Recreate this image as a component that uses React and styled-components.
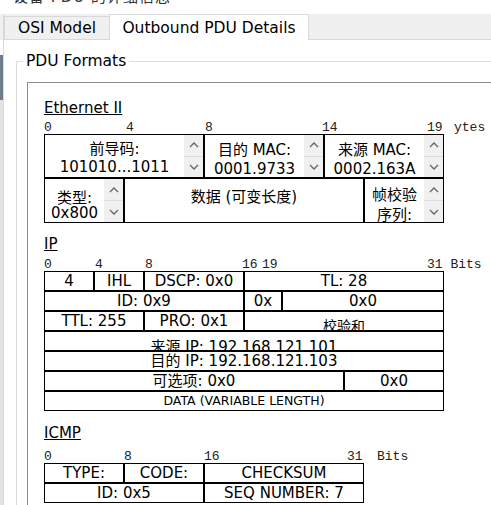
import React from 'react';
import styled, { createGlobalStyle } from 'styled-components';

const GlobalStyle = createGlobalStyle`
  html, body {
    margin: 0;
    padding: 0;
    background: #fff;
  }
  body {
    width: 491px;
    height: 505px;
    overflow: hidden;
    font-family: "DejaVu Sans", "Noto Sans CJK SC", sans-serif;
    color: #000;
  }
`;

const ethTicks = [[0, '0'], [82, '4'], [161, '8'], [278, '14'], [383, '19'], [410, 'ytes']];
const ipTicks = [[0, '0'], [51, '4'], [101, '8'], [198, '16'], [218, '19'], [383, '31 Bits']];
const icmpTicks = [[0, '0'], [80, '8'], [160, '16'], [303, '31'], [333, 'Bits']];

function Chevron({ down }) {
    return (
        <svg width="10" height="6" viewBox="0 0 10 6">
            <path
                d={down ? 'M1 1 L5 5 L9 1' : 'M1 5 L5 1 L9 5'}
                stroke="#666"
                strokeWidth="1.3"
                fill="none"
            />
        </svg>
    );
}

function Spinner() {
    return (
        <Spin>
            <SpinBtn><Chevron /></SpinBtn>
            <SpinBtn><Chevron down /></SpinBtn>
        </Spin>
    );
}

function Ruler({ ticks, mt }) {
    return (
        <RulerLine $mt={mt}>
            {ticks.map(([x, label]) => (
                <Tick key={label + x} $x={x}>{label}</Tick>
            ))}
        </RulerLine>
    );
}

export default function App() {
    return (
        <Window>
            <GlobalStyle />
            <LeftEdge />
            <Main>
                <TitleStrip>
                    <TitleText>设备 PDU 的详细信息</TitleText>
                </TitleStrip>
                <TabBar>
                    <Tab $w={106}>OSI Model</Tab>
                    <Tab $w={200} $active>Outbound PDU Details</Tab>
                </TabBar>
                <Content>
                    <Group>
                        <Legend>PDU Formats</Legend>
                        <Panel>
                            <SectionTitle>Ethernet II</SectionTitle>
                            <Ruler ticks={ethTicks} mt={3} />
                            <Frame $w={400}>
                                <Row $h={44}>
                                    <EthCell $w={160}>
                                        <CellText $pt={5} $lh={18}>{'前导码:\n101010...1011'}</CellText>
                                        <Spinner />
                                    </EthCell>
                                    <EthCell $w={120}>
                                        <CellText $pt={6} $lh={19}>{'目的 MAC:\n0001.9733'}</CellText>
                                        <Spinner />
                                    </EthCell>
                                    <EthCell $w={120}>
                                        <CellText $pt={6} $lh={19}>{'来源 MAC:\n0002.163A'}</CellText>
                                        <Spinner />
                                    </EthCell>
                                </Row>
                                <Row $h={45}>
                                    <EthCell $w={80}>
                                        <CellText $pt={12} $lh={15}>{'类型:\n0x800'}</CellText>
                                        <Spinner />
                                    </EthCell>
                                    <EthCell $w={240}>
                                        <CellText $pt={9} $lh={18}>数据 (可变长度)</CellText>
                                    </EthCell>
                                    <EthCell $w={80}>
                                        <CellText $pt={6} $lh={20}>{'帧校验\n序列:'}</CellText>
                                        <Spinner />
                                    </EthCell>
                                </Row>
                            </Frame>

                            <SectionTitle $mt={12}>IP</SectionTitle>
                            <Ruler ticks={ipTicks} mt={4} />
                            <Frame $w={400}>
                                <Row $h={20}>
                                    <Cell $w={50}>4</Cell>
                                    <Cell $w={50}>IHL</Cell>
                                    <Cell $w={100}>DSCP: 0x0</Cell>
                                    <Cell $w={200}>TL: 28</Cell>
                                </Row>
                                <Row $h={20}>
                                    <Cell $w={200}>ID: 0x9</Cell>
                                    <Cell $w={38}>0x</Cell>
                                    <Cell $w={162}>0x0</Cell>
                                </Row>
                                <Row $h={20}>
                                    <Cell $w={100}>TTL: 255</Cell>
                                    <Cell $w={100}>PRO: 0x1</Cell>
                                    <Cell $w={200} $pt={6} $lh={16} $fs={14}>校验和</Cell>
                                </Row>
                                <Row $h={20}>
                                    <Cell $w={400} $pt={6}>来源 IP: 192.168.121.101</Cell>
                                </Row>
                                <Row $h={20}>
                                    <Cell $w={400}>目的 IP: 192.168.121.103</Cell>
                                </Row>
                                <Row $h={20}>
                                    <Cell $w={300}>可选项: 0x0</Cell>
                                    <Cell $w={100}>0x0</Cell>
                                </Row>
                                <Row $h={20}>
                                    <Cell $w={400} $fs={12.5}>DATA (VARIABLE LENGTH)</Cell>
                                </Row>
                            </Frame>

                            <SectionTitle $mt={13}>ICMP</SectionTitle>
                            <Ruler ticks={icmpTicks} mt={7} />
                            <Frame $w={320}>
                                <Row $h={20}>
                                    <Cell $w={80}>TYPE:</Cell>
                                    <Cell $w={80}>CODE:</Cell>
                                    <Cell $w={160}>CHECKSUM</Cell>
                                </Row>
                                <Row $h={20}>
                                    <Cell $w={160}>ID: 0x5</Cell>
                                    <Cell $w={160}>SEQ NUMBER: 7</Cell>
                                </Row>
                            </Frame>
                        </Panel>
                    </Group>
                </Content>
            </Main>
        </Window>
    );
}

const Window = styled.div`
    display: flex;
    width: 491px;
    height: 505px;
    overflow: hidden;
    background: #fff;
`;

const LeftEdge = styled.div`
    flex: none;
    width: 3px;
    background: linear-gradient(
        to bottom,
        #fff 0 14px,
        #f0f0f0 14px 40px,
        #fff 40px 55px,
        #6d7d8c 55px 100px,
        #e2e2e2 100px
    );
`;

const Main = styled.div`
    flex: 1;
    display: flex;
    flex-direction: column;
    min-width: 0;
`;

const TitleStrip = styled.div`
    flex: none;
    height: 14px;
    overflow: hidden;
    padding-left: 10px;
`;

const TitleText = styled.div`
    margin-top: -10px;
    font-size: 15px;
    line-height: 15px;
    letter-spacing: 1px;
    color: #333;
    white-space: nowrap;
`;

const TabBar = styled.div`
    flex: none;
    display: flex;
    align-items: flex-end;
    height: 26px;
    box-sizing: border-box;
    background: #f0f0f0;
    border-left: 1px solid #d9d9d9;
    border-bottom: 1px solid #d9d9d9;
`;

const Tab = styled.div`
    box-sizing: border-box;
    width: ${p => p.$w}px;
    height: ${p => (p.$active ? 26 : 24)}px;
    margin-bottom: -1px;
    margin-left: ${p => (p.$active ? -1 : 0)}px;
    display: flex;
    align-items: center;
    justify-content: center;
    border: 1px solid #d9d9d9;
    border-bottom: ${p => (p.$active ? 'none' : '1px solid #d9d9d9')};
    background: ${p => (p.$active ? '#fff' : '#f0f0f0')};
    font-size: 15.5px;
    color: #000;
    white-space: nowrap;
`;

const Content = styled.div`
    flex: 1;
    border-left: 1px solid #d9d9d9;
    padding-left: 12px;
`;

const Group = styled.fieldset`
    margin: 12px 0 0;
    padding: 12px 0 0 10px;
    min-width: 0;
    border: 1px solid #dcdcdc;
    border-right: none;
    border-bottom: none;
`;

const Legend = styled.legend`
    margin-left: -4px;
    padding: 0 3px;
    font-size: 15.5px;
    line-height: 18px;
    color: #000;
`;

const Panel = styled.div`
    border-top: 1px solid #848e94;
    border-left: 1px solid #848e94;
    padding: 16px 0 40px 16px;
    background: #fff;
`;

const SectionTitle = styled.div`
    margin-top: ${p => p.$mt || 0}px;
    font-size: 15px;
    line-height: 18px;
    text-decoration: underline;
`;

const RulerLine = styled.div`
    position: relative;
    height: 14px;
    margin-top: ${p => p.$mt}px;
    font-family: "Liberation Mono", "DejaVu Sans Mono", monospace;
    font-size: 13px;
    line-height: 16px;
    color: #222;
`;

const Tick = styled.span`
    position: absolute;
    top: 0;
    left: ${p => p.$x}px;
    white-space: pre;
`;

const Frame = styled.div`
    display: flex;
    flex-direction: column;
    width: ${p => p.$w}px;
`;

const Row = styled.div`
    display: flex;
    height: ${p => p.$h}px;
`;

const EthCell = styled.div`
    box-sizing: border-box;
    width: ${p => p.$w}px;
    height: 100%;
    display: flex;
    border: 1px solid #000;
    overflow: hidden;
`;

const CellText = styled.div`
    flex: 1;
    padding-top: ${p => p.$pt}px;
    line-height: ${p => p.$lh}px;
    font-size: 15px;
    text-align: center;
    white-space: pre;
`;

const Spin = styled.div`
    flex: none;
    width: 19px;
    display: flex;
    flex-direction: column;
    background: #f0f0f0;
`;

const SpinBtn = styled.div`
    flex: 1;
    display: flex;
    align-items: center;
    justify-content: center;
    & + & {
        border-top: 1px solid #dcdcdc;
    }
`;

const Cell = styled.div`
    box-sizing: border-box;
    width: ${p => p.$w}px;
    height: 100%;
    border: 1px solid #000;
    padding-top: ${p => p.$pt || 0}px;
    font-size: ${p => p.$fs || 15}px;
    line-height: ${p => p.$lh || 18}px;
    text-align: center;
    white-space: nowrap;
    overflow: hidden;
`;
